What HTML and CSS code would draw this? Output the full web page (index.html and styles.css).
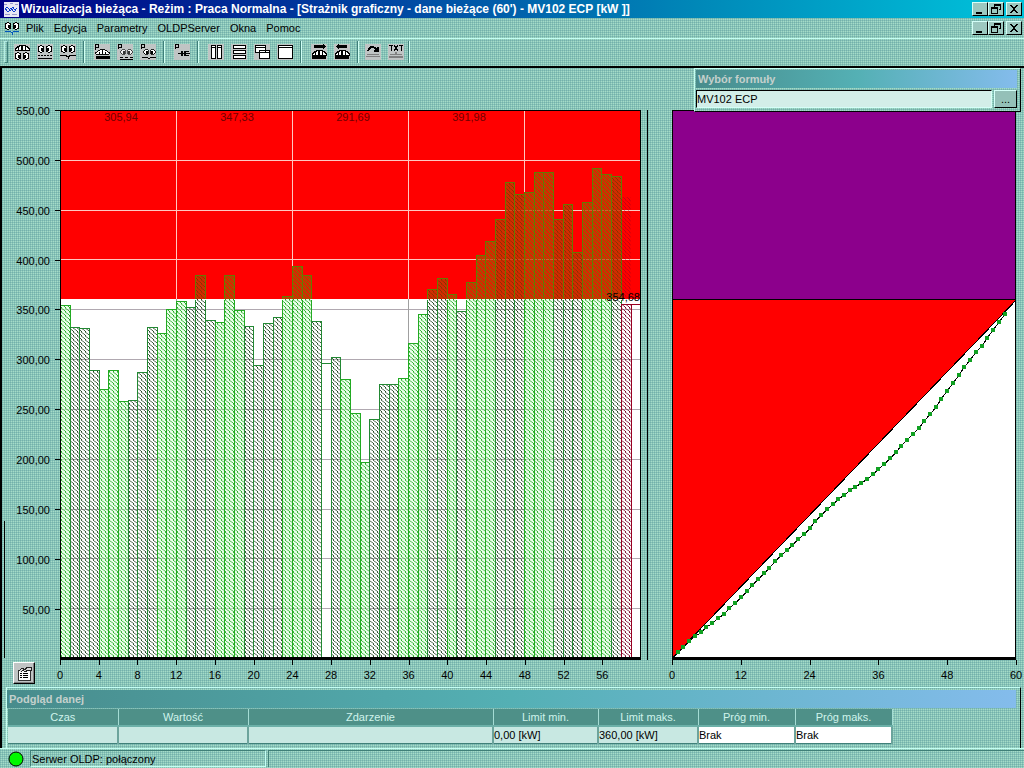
FILE: index.html
```
<!DOCTYPE html>
<html lang="pl">
<head>
<meta charset="utf-8">
<title>Wizualizacja bieżąca</title>
<link rel="stylesheet" href="styles.css">
</head>
<body>
<svg class="defs" aria-hidden="true" shape-rendering="crispEdges">
  <symbol id="eyes" viewBox="0 0 16 8"><ellipse cx="4" cy="4" rx="3" ry="3.2" fill="#fff" stroke="#000"/><ellipse cx="12" cy="4" rx="3" ry="3.2" fill="#fff" stroke="#000"/><path d="M4 3h2v3H4zM10 3h2v3h-2z"/></symbol>
  <symbol id="meter" viewBox="0 0 16 7"><path d="M1 6V4h1V3h1V2h2V1h6v1h2v1h1v1h1v2z" fill="#fff" stroke="#000"/><path d="M7 1h2v5H7zM4 3h1v3H4zM11 3h1v3h-1z"/></symbol>
  <symbol id="i-minimize" viewBox="0 0 14 12"><path d="M3 9h6v2H3z"/></symbol>
  <symbol id="i-restore" viewBox="0 0 14 12"><path d="M5 1h7v6h-2V6h1V3H6v1H5zM2 4h7v7H2zm1 2v4h5V6z" fill-rule="evenodd"/></symbol>
  <symbol id="i-close" viewBox="0 0 14 12"><path d="M3 2h2v1h1v1h2V3h1V2h2v1h-1v1H9v1H8v2h1v1h1v1h1v1H9V9H8V8H6v1H5v1H3V9h1V8h1V7h1V5H5V4H4V3H3z"/></symbol>
</svg>

<header class="titlebar">
  <svg class="app-icon" viewBox="0 0 16 16" shape-rendering="crispEdges"><path fill="#e8e8f4" d="M0 0h16v16H0z"/><path d="M1 2h3v1H1zM7 1h3v1H7zM12 2h3v1h-3zM2 13h5v1H2zM9 13h5v1H9z" fill="#99c"/><path d="M1 9q2-5 4-3l2 4 3-5 2 4 3-3M2 7l3 4 3-5 3 5 3-4" fill="none" stroke="#0033cc"/></svg>
  <h1 class="title">Wizualizacja bieżąca - Reżim : Praca Normalna - [Strażnik graficzny - dane bieżące (60') - MV102 ECP [kW ]]</h1>
  <div class="winbuttons">
    <button class="winbtn" aria-label="Minimalizuj"><svg><use href="#i-minimize"/></svg></button>
    <button class="winbtn" aria-label="Przywróć"><svg><use href="#i-restore"/></svg></button>
    <button class="winbtn winclose" aria-label="Zamknij"><svg><use href="#i-close"/></svg></button>
  </div>
</header>

<nav class="menubar">
  <svg class="menu-icon" viewBox="0 0 16 14" shape-rendering="crispEdges"><use href="#eyes" width="16" height="8" y="1"/><path d="M1 10h5l2 2 2-2h5M8 11v3" fill="none" stroke="#0055bb"/></svg>
  <button class="menu">Plik</button><button class="menu">Edycja</button><button class="menu">Parametry</button><button class="menu">OLDPServer</button><button class="menu">Okna</button><button class="menu">Pomoc</button>
  <div class="winbuttons">
    <button class="winbtn" aria-label="Minimalizuj okno"><svg><use href="#i-minimize"/></svg></button>
    <button class="winbtn" aria-label="Przywróć okno"><svg><use href="#i-restore"/></svg></button>
    <button class="winbtn winclose" aria-label="Zamknij okno"><svg><use href="#i-close"/></svg></button>
  </div>
</nav>

<div class="toolbar" role="toolbar">
  <div class="grip"></div>
  <div class="group group-first">
    <button class="tool" aria-label="Miernik i podgląd"><svg viewBox="0 0 16 16"><use href="#meter" width="16" height="7"/><use href="#eyes" width="16" height="8" y="8"/></svg></button>
    <button class="tool" aria-label="Podgląd tabeli"><svg viewBox="0 0 16 16"><use href="#eyes" width="16" height="8" y="1"/><path d="M1 11h2v1H1zM4 11h2v1H4zM7 11h2v1H7zM10 11h2v1h-2zM13 11h2v1h-2zM1 14h14v1H1z"/></svg></button>
    <button class="tool" aria-label="Podgląd wykresu"><svg viewBox="0 0 16 16"><use href="#eyes" width="16" height="8" y="1"/><path d="M0 11h5l3 2 3-2h5M8 12v3" fill="none" stroke="#000"/></svg></button>
  </div>
  <div class="group">
    <button class="tool" aria-label="Parametry miernika"><svg viewBox="0 0 16 16"><path d="M1 6V0h3v3H1" fill="none" stroke="#000"/><use href="#meter" width="15" height="8" x="1" y="4"/><path d="M2 12h14v3H2z"/></svg></button>
    <button class="tool" aria-label="Parametry tabeli"><svg viewBox="0 0 16 16"><path d="M1 5V0h3v3H1" fill="none" stroke="#000"/><use href="#eyes" width="13" height="8" x="3" y="4" opacity=".75"/><path d="M3 13h3v1H3zM8 13h3v1H8zM13 13h3v1h-3zM3 15h13v1H3z"/></svg></button>
    <button class="tool" aria-label="Parametry wykresu"><svg viewBox="0 0 16 16"><path d="M1 5V0h3v3H1" fill="none" stroke="#000"/><use href="#eyes" width="13" height="8" x="3" y="4"/><path d="M2 13h5l2 2 2-2h5" fill="none" stroke="#000"/></svg></button>
  </div>
  <div class="group">
    <button class="tool" aria-label="Parametry połączenia"><svg viewBox="0 0 16 16"><path d="M1 5V0h3v3H1" fill="none" stroke="#000"/><path d="M4 9h3V7h2v2h1V7h5v1h-3v1h4v1h-4v1h3v1h-5v-2H9v2H7v-2H4z"/></svg></button>
  </div>
  <div class="group">
    <button class="tool" aria-label="Okna pionowo"><svg viewBox="0 0 16 16"><path d="M3 1h4v13H3zM9 1h4v13H9zM3 3h4M9 3h4" fill="#fff" stroke="#000"/></svg></button>
    <button class="tool" aria-label="Okna poziomo"><svg viewBox="0 0 16 16"><path d="M2 1h12v3H2zM2 6h12v3H2zM2 11h12v3H2z" fill="#fff" stroke="#000"/></svg></button>
    <button class="tool" aria-label="Okna kaskadowo"><svg viewBox="0 0 16 16"><path d="M1 1h10v7H1zM1 3h10M5 6h10v8H5zM5 8h10" fill="#fff" stroke="#000"/></svg></button>
    <button class="tool" aria-label="Pełne okno"><svg viewBox="0 0 16 16"><path d="M1 1h14v13H1zM1 3h14" fill="#fff" stroke="#000"/></svg></button>
  </div>
  <div class="group">
    <button class="tool" aria-label="Następny miernik"><svg viewBox="0 0 16 16"><path d="M3 1h9V0h1v1h1v1h1v1h-1v1h-1v1h-1V4H3z"/><use href="#meter" width="16" height="7" y="5"/><path d="M1 12h14v3H1z"/></svg></button>
    <button class="tool" aria-label="Poprzedni miernik"><svg viewBox="0 0 16 16"><path d="M13 1H5V0H4v1H3v1H2v1h1v1h1v1h1V4h8z"/><use href="#meter" width="16" height="7" y="5"/><path d="M1 12h14v3H1z"/></svg></button>
  </div>
  <div class="group group-last">
    <button class="tool" aria-label="Obróć"><svg viewBox="0 0 16 16"><path d="M3 7q3-7 8-2l2 2M13 3v4H9" fill="none" stroke="#000" stroke-width="2"/><path d="M2 10h12v1H2zM1 12h14v1H1z" fill="#808080"/></svg></button>
    <button class="tool" aria-label="Tekst"><svg viewBox="0 0 16 16"><path d="M1 1h4M3 1v6M6 1l4 6M10 1L6 7M11 1h4M13 1v6" fill="none" stroke="#000"/><path d="M7 8h2v2H7zM2 10h12v1H2zM1 12h14v2H1z" fill="#808080"/></svg></button>
  </div>
</div>

<main class="client">
  <section class="charts">
    <div class="y-axis" id="y-axis"></div>
    <svg class="plot" id="bars" viewBox="0 0 581 549" preserveAspectRatio="none" shape-rendering="crispEdges" role="img" aria-label="Moc w kolejnych minutach">
      <defs>
        <pattern id="hatch-light" width="4" height="4" patternUnits="userSpaceOnUse"><path d="M0 0h4v4H0z" fill="#d8ffd8" opacity=".5"/><path d="M0 0h1v1H0zM1 1h1v1H1zM2 2h1v1H2zM3 3h1v1H3z" fill="#22aa22"/></pattern>
        <pattern id="hatch-dark" width="4" height="4" patternUnits="userSpaceOnUse"><path d="M0 0h1v1H0zM1 1h1v1H1zM2 2h1v1H2zM3 3h1v1H3z" fill="#224422"/></pattern>
        <pattern id="over-light" width="4" height="4" patternUnits="userSpaceOnUse"><path d="M0 0h4v4H0z" fill="#cc3300" opacity=".75"/><path d="M0 0h1v1H0zM1 1h1v1H1zM2 2h1v1H2zM3 3h1v1H3z" fill="#777700"/></pattern>
        <pattern id="over-dark" width="4" height="4" patternUnits="userSpaceOnUse"><path d="M0 0h4v4H0z" fill="#cc3300" opacity=".85"/><path d="M0 0h1v1H0zM1 1h1v1H1zM2 2h1v1H2zM3 3h1v1H3z" fill="#883300"/></pattern>
        <pattern id="hatch-red" width="4" height="4" patternUnits="userSpaceOnUse"><path d="M0 0h1v1H0zM1 1h1v1H1zM2 2h1v1H2zM3 3h1v1H3z" fill="#770022"/></pattern>
      </defs>
    </svg>
    <svg class="plot plot-sum" id="sum" viewBox="0 0 344 549" preserveAspectRatio="none" shape-rendering="crispEdges" role="img" aria-label="Energia narastająco"></svg>
    <div class="divider"></div>
    <div class="corner"><button class="props" aria-label="Właściwości wykresu"><svg viewBox="0 0 16 16" shape-rendering="crispEdges"><path d="M2 5h12v10H2z" fill="#fff" stroke="#333"/><path d="M4 8h2v1H4zM7 8h5v1H7zM4 10h2v1H4zM7 10h5v1H7zM4 12h2v1H4zM7 12h5v1H7z"/><path d="M3 6l3-3 3 2 2-3h4v3h-3l-3 2-2-2-2 2" fill="#ddd" stroke="#222"/></svg></button></div>
    <div class="x-axis x-axis-bars" id="x-bars"></div>
    <div class="x-axis x-axis-sum" id="x-sum"></div>
  </section>

  <form class="formula">
    <label class="caption" for="formula-name">Wybór formuły</label>
    <div class="formula-row">
      <input class="formula-input" id="formula-name" type="text" value="MV102 ECP">
      <button class="formula-btn" type="button" aria-label="Wybierz">...</button>
    </div>
  </form>

  <section class="preview">
    <h2 class="caption">Podgląd danej</h2>
    <table class="data">
      <colgroup><col class="c-time"><col class="c-value"><col class="c-event"><col class="c-lmin"><col class="c-lmax"><col class="c-prog"><col class="c-prog"></colgroup>
      <thead><tr><th>Czas</th><th>Wartość</th><th>Zdarzenie</th><th>Limit min.</th><th>Limit maks.</th><th>Próg min.</th><th>Próg maks.</th></tr></thead>
      <tbody><tr><td></td><td></td><td></td><td>0,00 [kW]</td><td>360,00 [kW]</td><td class="plain">Brak</td><td class="plain">Brak</td></tr></tbody>
    </table>
  </section>
</main>

<footer class="status">
  <svg class="led" viewBox="0 0 16 16"><circle cx="8" cy="8" r="7" fill="#00f800" stroke="#000"/></svg>
  <div class="status-text">Serwer OLDP: połączony</div>
  <div class="status-rest"></div>
</footer>
<script src="chart.js"></script>
</body>
</html>
```
FILE: styles.css
```
:root {
  --dither:
    linear-gradient(rgba(72, 136, 144, .3) 50%, transparent 50%) 0 0 / 2px 2px,
    linear-gradient(90deg, rgba(72, 136, 144, .3) 50%, transparent 50%) 0 0 / 2px 2px,
    #a4dcc8;
  --light: #b4ece4;
  --shade: #3f8078;
}
* { box-sizing: border-box; }
body {
  margin: 0;
  min-height: 100vh;
  display: flex;
  flex-direction: column;
  background: var(--dither);
  font: 11px/14px "Liberation Sans", Arial, sans-serif;
  color: #000;
}
button, input { font: inherit; color: inherit; margin: 0; padding: 0; border: 0; background: none; }
.defs { position: absolute; width: 0; height: 0; }

.titlebar {
  display: flex;
  align-items: center;
  height: 18px;
  padding: 0 2px 0 3px;
  gap: 2px;
  background: linear-gradient(90deg, #000084, #0040a0 35%, #0088b8 68%, #00c4dc);
}
.app-icon { width: 16px; height: 15px; flex: none; }
.title { margin: 0; flex: 1; font-size: 12px; line-height: 16px; font-weight: bold; color: #fff; white-space: nowrap; overflow: hidden; }
.winbuttons { display: flex; margin-left: auto; }
.winbtn {
  width: 16px; height: 14px;
  background: #9cc8c0;
  border: 1px solid;
  border-color: #d4fff8 #000 #000 #d4fff8;
}
.winbtn svg { display: block; width: 14px; height: 12px; }
.winclose { margin-left: 2px; }

.menubar { display: flex; align-items: center; height: 20px; padding: 0 2px 0 4px; }
.menu-icon { width: 16px; height: 14px; margin-right: 1px; }
.menu { padding: 0 5px; line-height: 18px; }

.toolbar {
  display: flex;
  align-items: center;
  height: 28px;
  padding: 0 0 2px 4px;
  border-top: 1px solid #c4fff4;
}
.grip { width: 4px; height: 22px; border: 1px solid; border-color: var(--light) var(--shade) var(--shade) var(--light); }
.group { display: flex; height: 22px; align-items: center; padding: 0 5px; border-right: 1px solid #d0fff4; box-shadow: inset -1px 0 var(--shade); }
.group-first { padding-left: 2px; }
.group-last { padding: 0 2px; }
.tool { width: 23px; height: 18px; display: flex; align-items: center; justify-content: center; }
.tool svg { width: 16px; height: 16px; background: #c0c4c4; shape-rendering: crispEdges; }

.client {
  position: relative;
  flex: 1;
  display: flex;
  flex-direction: column;
  border-top: 2px solid #000;
  border-left: 2px solid #000;
}
.charts {
  flex: 1;
  display: grid;
  grid-template-columns: 58px 581fr 31px 344fr 8px;
  grid-template-rows: 42px 1fr 27px;
}
.y-axis {
  grid-area: 2 / 1;
  display: grid;
  grid-auto-rows: 1fr;
  margin-bottom: 1px;
  background: linear-gradient(#000, #000) 2px 100% / 1px 25% no-repeat;
}
.y-tick { text-align: right; position: relative; }
.y-tick span { display: block; margin: -6px 10px 0 0; }
.y-tick::after { content: ""; position: absolute; top: 0; right: 0; width: 5px; border-top: 1px solid #000; }
.plot { display: block; width: 100%; height: 100%; min-height: 0; grid-area: 2 / 2; font-size: 11px; }
.plot-sum { grid-area: 2 / 4; }
.divider { grid-area: 2 / 3; width: 7px; border-right: 1px solid #000; }
.corner { grid-area: 3 / 1; padding: 2px 0 0 11px; }
.props { width: 22px; height: 22px; padding: 2px; background: #c0c4c4; border: 1px solid; border-color: #fff #000 #000 #fff; box-shadow: inset -1px -1px #808080; }
.props svg { display: block; width: 16px; height: 16px; }
.x-axis { display: grid; grid-auto-flow: column; grid-auto-columns: 1fr; }
.x-axis-bars { grid-area: 3 / 2; }
.x-axis-sum { grid-area: 3 / 4; grid-template-columns: repeat(5, 1fr) 0; }
.x-tick { border-left: 1px solid #000; height: 5px; }
.x-tick span { display: block; width: 30px; margin-left: -16px; padding-top: 8px; text-align: center; }

.caption { display: block; margin: 0; padding: 0 2px; height: 18px; font-size: 11px; line-height: 18px; font-weight: bold; color: #c4d0cc; background: linear-gradient(90deg, #488c8c, #54b0b4 50%, #84bcec); }

.formula {
  position: absolute;
  right: 3px;
  top: 0;
  width: 32%;
  padding: 1px 3px 3px 1px;
  background: var(--dither);
  border: 1px solid;
  border-color: #c4fff4 #000 #000 #c4fff4;
}
.formula-row { display: flex; gap: 2px; margin-top: 2px; }
.formula-input { flex: 1; min-width: 0; height: 18px; background: #d2eee8; border: 1px solid; border-color: #000 #d4fff8 #d4fff8 #000; }
.formula-btn { width: 23px; height: 18px; background: #94c0b8; border: 1px solid; border-color: #d4fff8 #000 #000 #d4fff8; line-height: 16px; }

.preview { margin: 0 3px 0 4px; padding: 2px 0 4px 0; border-top: 1px solid #c4fff4; border-left: 1px solid #c4fff4; border-right: 1px solid #000; }
.preview .caption { margin-right: 4px; height: 18px; }
.data { width: calc(100% - 128px); margin: 1px 0 0 1px; border-collapse: collapse; table-layout: fixed; }
.c-time { width: 110px; } .c-value { width: 130px; } .c-lmin { width: 105px; } .c-lmax { width: 100px; } .c-prog { width: 97px; }
.data th { height: 17px; padding: 0; font-weight: normal; color: #d0f4ec; background: #4e9088; border-right: 1px solid #a4dcd4; border-bottom: 2px solid #6cb0a8; }
.data td { height: 18px; padding: 0; background: #c8e8e2; border-right: 2px solid #6ca49c; border-bottom: 1px solid var(--shade); }
.data td.plain { background: #fff; }

.status { display: flex; align-items: center; height: 20px; padding-left: 8px; border-top: 1px solid #c4fff4; }
.led { width: 16px; height: 16px; }
.status-text { width: 236px; height: 17px; margin-left: 6px; padding-left: 1px; line-height: 17px; border: 1px solid; border-color: var(--shade) #c4fff4 #c4fff4 var(--shade); }
.status-rest { flex: 1; height: 17px; margin-left: 2px; border-left: 1px solid var(--shade); border-top: 1px solid var(--shade); }
```
FILE: chart.js
```
const NS = "http://www.w3.org/2000/svg";
const HEIGHT = 548, BARS_W = 580, SUM_W = 344, LIMIT = 360, MAX = 550, MINUTES = 60;
const limitY = HEIGHT - LIMIT * HEIGHT / MAX;

// Average power of each minute, kW
const power = [354, 332, 331, 289, 270, 289, 258, 259, 287, 332, 326, 350, 358, 352, 384,
  339, 337, 384, 349, 333, 294, 336, 342, 363, 393, 384, 338, 296, 302, 280, 246, 197, 240,
  275, 275, 281, 316, 345, 370, 381, 365, 348, 377, 404, 419, 441, 478, 466, 468, 488, 488,
  441, 456, 407, 458, 492, 486, 484];
const light = new Set([0, 4, 5, 6, 10, 11, 12, 16, 17, 18, 23, 24, 25, 29, 30, 31, 35, 36, 37,
  40, 42, 43, 44, 48, 49, 50, 54, 55, 56]);
const blank = 27;

function add(parent, name, attrs, text) {
  const el = document.createElementNS(NS, name);
  for (const key in attrs) el.setAttribute(key, attrs[key]);
  if (text) el.textContent = text;
  parent.append(el);
  return el;
}
const toY = v => Math.round(HEIGHT - v * HEIGHT / MAX);
const toX = i => Math.round(i * BARS_W / MINUTES);

const bars = document.getElementById("bars");
add(bars, "rect", { width: BARS_W, height: HEIGHT, fill: "#fff" });
add(bars, "rect", { width: BARS_W, height: limitY, fill: "#f00" });
for (let v = 50; v < MAX; v += 50) {
  add(bars, "rect", { x: 0, y: toY(v), width: BARS_W, height: 1, fill: v > LIMIT ? "#ffc8c0" : "#b0a8b0" });
}
for (let i = 12; i < MINUTES; i += 12) {
  add(bars, "rect", { x: toX(i), y: 0, width: 1, height: limitY, fill: "#ffc8c0" });
  add(bars, "rect", { x: toX(i), y: limitY, width: 1, height: HEIGHT - limitY, fill: "#a0a0a0" });
}
power.forEach((v, i) => {
  const x = toX(i), w = toX(i + 1) - x, y = toY(v), tone = light.has(i) ? "light" : "dark";
  const low = Math.max(y, Math.round(limitY));
  if (i !== blank) add(bars, "rect", { x, y: low, width: w, height: HEIGHT - low, fill: `url(#hatch-${tone})` });
  const line = tone === "light" ? "#22aa22" : "#228833";
  add(bars, "path", { d: `M${x + .5} ${HEIGHT}V${low + .5}${low === y ? `h${w}` : `m${w} 0`}V${HEIGHT}`, fill: "none", stroke: line });
  if (y < low) {
    add(bars, "rect", { x, y, width: w, height: low - y, fill: `url(#over-${tone})` });
    add(bars, "path", { d: `M${x + .5} ${low}V${y + .5}h${w}V${low}`, fill: "none", stroke: "#667a00" });
  }
});

// Forecast for the rest of the hour
const fx = toX(58);
add(bars, "rect", { x: fx, y: toY(463), width: 10, height: limitY - toY(463), fill: "url(#hatch-red)", opacity: ".4" });
add(bars, "rect", { x: fx, y: 194, width: 10, height: HEIGHT - 194, fill: "url(#hatch-red)" });
add(bars, "path", { d: `M${fx + .5} ${HEIGHT}V194.5H${BARS_W}M${fx + 10.5} 194V${HEIGHT}`, fill: "none", stroke: "#990022" });
add(bars, "path", { d: `M.5 ${HEIGHT}V.5H580.5V${HEIGHT}`, fill: "none", stroke: "#000" });
add(bars, "rect", { x: 0, y: 547, width: 581, height: 2 });
["305,94", "347,33", "291,69", "391,98"].forEach((label, i) =>
  add(bars, "text", { x: 61 + i * 116, y: 11, "text-anchor": "middle", fill: "#700000" }, label));
add(bars, "text", { x: 580, y: 191, "text-anchor": "end" }, "354,68");

const sum = document.getElementById("sum");
add(sum, "rect", { width: SUM_W, height: HEIGHT, fill: "#fff" });
add(sum, "rect", { width: SUM_W, height: 190, fill: "#8c008c" });
add(sum, "path", { d: `M0 190H${SUM_W}L0 ${HEIGHT}z`, fill: "#f00" });
add(sum, "path", { d: `M0 189.5H${SUM_W}M${SUM_W} 190L0 ${HEIGHT}M.5 ${HEIGHT}V.5H343.5V${HEIGHT}`, fill: "none", stroke: "#000" });
add(sum, "rect", { x: 0, y: 547, width: SUM_W, height: 2 });
let total = 0;
const points = power.map((v, i) => {
  total += v / MINUTES;
  return [Math.round((i + 1) * SUM_W / MINUTES), toY(total)];
});
add(sum, "polyline", { points: [[0, HEIGHT], ...points].join(" "), fill: "none", stroke: "#000" });
points.forEach(([x, y]) => add(sum, "rect", { x: x - 2, y: y - 2, width: 4, height: 4, fill: "#11a022" }));

function ticks(id, cls, from, to, step, format) {
  const axis = document.getElementById(id);
  for (let v = from; step > 0 ? v <= to : v >= to; v += step) {
    const tick = document.createElement("div");
    const label = document.createElement("span");
    tick.className = cls;
    label.textContent = format(v);
    tick.append(label);
    axis.append(tick);
  }
}
ticks("y-axis", "y-tick", 550, 50, -50, v => v + ",00");
ticks("x-bars", "x-tick", 0, 56, 4, String);
ticks("x-sum", "x-tick", 0, 60, 12, String);
```
